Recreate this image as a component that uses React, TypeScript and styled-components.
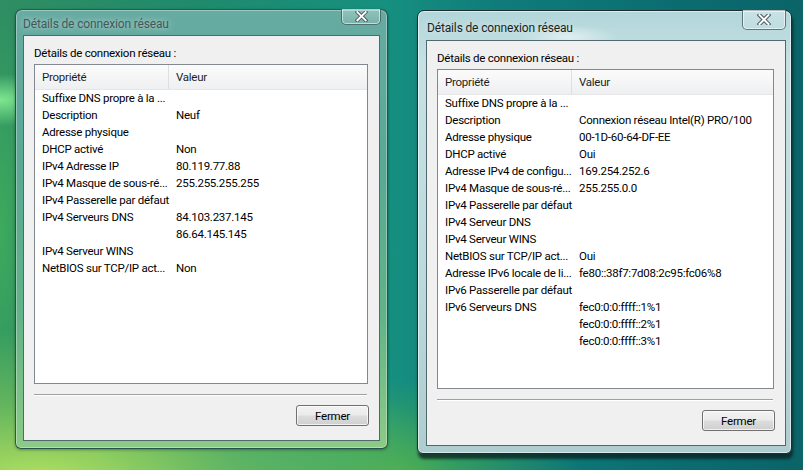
import React from 'react'
import styled, { createGlobalStyle, css } from 'styled-components'

type Row = [string, string]

const leftRows: Row[] = [
    ['Suffixe DNS propre à la ...', ''],
    ['Description', 'Neuf'],
    ['Adresse physique', ''],
    ['DHCP activé', 'Non'],
    ['IPv4 Adresse IP', '80.119.77.88'],
    ['IPv4 Masque de sous-ré...', '255.255.255.255'],
    ['IPv4 Passerelle par défaut', ''],
    ['IPv4 Serveurs DNS', '84.103.237.145'],
    ['', '86.64.145.145'],
    ['IPv4 Serveur WINS', ''],
    ['NetBIOS sur TCP/IP act...', 'Non'],
]

const rightRows: Row[] = [
    ['Suffixe DNS propre à la ...', ''],
    ['Description', 'Connexion réseau Intel(R) PRO/100'],
    ['Adresse physique', '00-1D-60-64-DF-EE'],
    ['DHCP activé', 'Oui'],
    ['Adresse IPv4 de configu...', '169.254.252.6'],
    ['IPv4 Masque de sous-ré...', '255.255.0.0'],
    ['IPv4 Passerelle par défaut', ''],
    ['IPv4 Serveur DNS', ''],
    ['IPv4 Serveur WINS', ''],
    ['NetBIOS sur TCP/IP act...', 'Oui'],
    ['Adresse IPv6 locale de li...', 'fe80::38f7:7d08:2c95:fc06%8'],
    ['IPv6 Passerelle par défaut', ''],
    ['IPv6 Serveurs DNS', 'fec0:0:0:ffff::1%1'],
    ['', 'fec0:0:0:ffff::2%1'],
    ['', 'fec0:0:0:ffff::3%1'],
]

const CloseIcon: React.FC<{ size: number }> = ({ size }) => (
    <svg width={size} height={size * 0.8} viewBox="0 0 12 10">
        <path d="M2 1 L10 9 M10 1 L2 9" stroke="#4d5c62" strokeWidth="3.6" strokeLinecap="square" fill="none" />
        <path d="M2 1 L10 9 M10 1 L2 9" stroke="#ffffff" strokeWidth="1.8" strokeLinecap="square" fill="none" />
    </svg>
)

const NetworkDialog: React.FC<{
    active?: boolean,
    rows: Row[],
}> = ({ active, rows }) => {
    return (
        <Window $active={active}>
            <TitleBar $active={active}>
                <Title $active={active}>Détails de connexion réseau</Title>
                <CloseButton $active={active}>
                    <CloseIcon size={active ? 14 : 13} />
                </CloseButton>
            </TitleBar>

            <Client>
                <Label>Détails de connexion réseau :</Label>
                <List>
                    <Header>
                        <HeadCell $first>Propriété</HeadCell>
                        <HeadCell>Valeur</HeadCell>
                    </Header>
                    <Rows>
                        {rows.map(([name, value], i) => (
                            <ListRow key={i}>
                                <Name>{name}</Name>
                                <Value>{value}</Value>
                            </ListRow>
                        ))}
                    </Rows>
                </List>
                <Separator />
                <Footer>
                    <Button>Fermer</Button>
                </Footer>
            </Client>
        </Window>
    )
}

const App: React.FC = () => {
    return (
        <>
            <GlobalStyle />
            <Desktop>
                <NetworkDialog rows={leftRows} />
                <NetworkDialog active rows={rightRows} />
            </Desktop>
        </>
    )
}

export default App

const GlobalStyle = createGlobalStyle`
    html, body {
        margin: 0;
        width: 803px;
        height: 470px;
        overflow: hidden;
    }
    * {
        box-sizing: border-box;
    }
`

const Desktop = styled.div`
    width: 803px;
    height: 470px;
    display: flex;
    align-items: flex-start;
    gap: 29px;
    padding: 9px 0 0 15px;
    font-family: Roboto, "Liberation Sans", sans-serif;
    font-size: 11.5px;
    letter-spacing: -0.25px;
    background:
        radial-gradient(ellipse 70px 26px at 0px 100px, rgba(150, 255, 160, 0.75), transparent 100%),
        radial-gradient(ellipse 420px 150px at 40px 480px, rgba(185, 230, 95, 0.95), rgba(150, 215, 90, 0.5) 50%, transparent 100%),
        radial-gradient(ellipse 180px 90px at 400px 470px, rgba(70, 170, 80, 0.9), transparent 100%),
        radial-gradient(ellipse 40px 220px at 0px 230px, rgba(70, 190, 90, 0.6), transparent 100%),
        linear-gradient(90deg, #2f8e62 0%, #1f8a6c 25%, #169080 48%, #0f7c7a 62%, #0b6c70 85%, #0a6468 100%);
`

const Window = styled.div<{ $active?: boolean }>`
    display: flex;
    flex-direction: column;
    border-radius: 7px 7px 6px 6px;
    ${({ $active }) => $active ? css`
        width: 375px;
        height: 444px;
        margin-top: 1px;
        padding: 0 5px 7px 8px;
        border: 1px solid #1d2c2e;
        background:
            radial-gradient(ellipse 50px 12px at 150px 26px, rgba(255, 255, 255, 0.55), transparent 100%),
            linear-gradient(180deg, #b2d6da 0%, #c5e1e4 12%, #bcd9dd 60%, #aecdd1 100%);
        box-shadow: inset 0 0 0 1px rgba(255, 255, 255, 0.55), 1px 5px 3px rgba(10, 30, 30, 0.75);
    ` : css`
        width: 373px;
        height: 440px;
        padding: 0 7px 7px 7px;
        border: 1px solid rgba(25, 60, 55, 0.8);
        background: linear-gradient(180deg, #67aba2 0%, #5aa895 35%, #63b288 70%, #8ccb86 100%);
        box-shadow: inset 0 0 0 1px rgba(255, 255, 255, 0.35), 0 1px 3px rgba(0, 0, 0, 0.35);
    `}
`

const TitleBar = styled.div<{ $active?: boolean }>`
    height: ${({ $active }) => $active ? 29 : 25}px;
    display: flex;
    justify-content: space-between;
    align-items: flex-start;
`

const Title = styled.div<{ $active?: boolean }>`
    font-size: 12px;
    letter-spacing: -0.15px;
    line-height: 16px;
    margin-top: ${({ $active }) => $active ? 9 : 6}px;
    padding-left: ${({ $active }) => $active ? 1 : 0}px;
    color: ${({ $active }) => $active ? '#1b1f22' : '#44585c'};
    text-shadow: 0 0 6px rgba(255, 255, 255, 0.7);
`

const CloseButton = styled.div<{ $active?: boolean }>`
    width: ${({ $active }) => $active ? 44 : 40}px;
    height: ${({ $active }) => $active ? 20 : 16}px;
    margin-right: ${({ $active }) => $active ? 0 : -1}px;
    margin-top: -1px;
    display: flex;
    align-items: center;
    justify-content: center;
    border: 1px solid rgba(60, 80, 85, 0.75);
    border-top: none;
    border-radius: 0 0 5px 5px;
    background: linear-gradient(180deg, rgba(255, 255, 255, 0.3), rgba(255, 255, 255, 0.1));
    box-shadow: inset 0 0 0 1px rgba(255, 255, 255, 0.55);
`

const Client = styled.div`
    flex: 1;
    display: flex;
    flex-direction: column;
    padding: 0 10px 14px 10px;
    background: #f0f0f0;
    border: 1px solid #52696c;
`

const Label = styled.div`
    line-height: 16px;
    margin-top: 9px;
    color: #000;
`

const List = styled.div`
    flex: 1;
    margin-top: 3px;
    margin-right: 1px;
    display: flex;
    flex-direction: column;
    background: #fff;
    border: 1px solid #828790;
`

const Header = styled.div`
    height: 25px;
    display: flex;
    background: linear-gradient(180deg, #fbfbfb 0%, #f6f6f7 45%, #eeeff0 100%);
    border-bottom: 1px solid #e6e6e6;
`

const HeadCell = styled.div<{ $first?: boolean }>`
    width: ${({ $first }) => $first ? '134px' : 'auto'};
    flex: ${({ $first }) => $first ? 'none' : 1};
    padding-left: 7px;
    line-height: 24px;
    color: #1e1e1e;
    border-right: ${({ $first }) => $first ? '1px solid #dedfe1' : 'none'};
`

const Rows = styled.div`
    display: flex;
    flex-direction: column;
`

const ListRow = styled.div`
    height: 17px;
    display: flex;
    line-height: 17px;
    color: #000;
`

const Name = styled.div`
    width: 134px;
    flex: none;
    padding-left: 7px;
    white-space: nowrap;
`

const Value = styled.div`
    flex: 1;
    padding-left: 7px;
    white-space: nowrap;
`

const Separator = styled.div`
    height: 2px;
    margin: 10px 2px 0 0;
    border-top: 1px solid #a0a0a0;
    border-bottom: 1px solid #ffffff;
`

const Footer = styled.div`
    display: flex;
    justify-content: flex-end;
    margin-top: 9px;
`

const Button = styled.div`
    width: 73px;
    height: 21px;
    display: flex;
    align-items: center;
    justify-content: center;
    color: #000;
    border: 1px solid #707070;
    border-radius: 3px;
    background: linear-gradient(180deg, #f2f2f2 0%, #ebebeb 48%, #dddddd 52%, #cfcfcf 100%);
    box-shadow: inset 0 0 0 1px rgba(255, 255, 255, 0.7);
`
